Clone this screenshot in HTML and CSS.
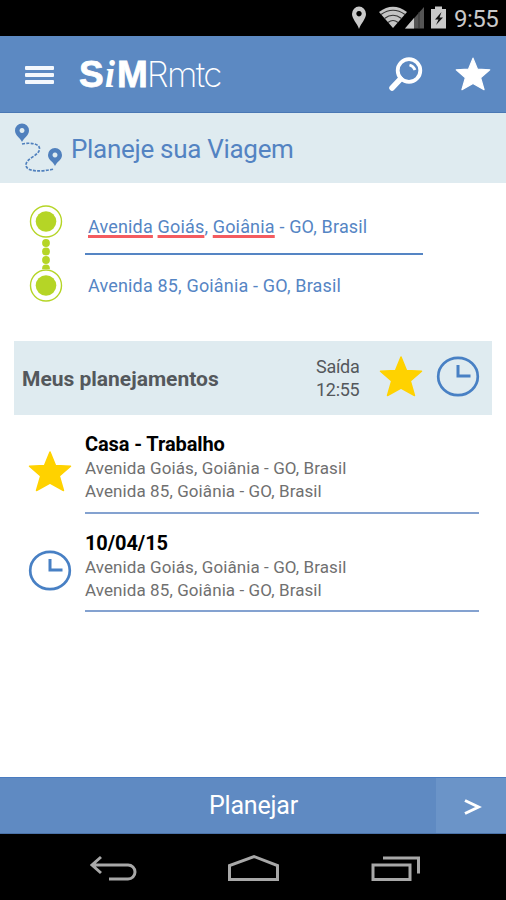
FILE: index.html
```html
<!DOCTYPE html>
<html lang="pt-BR">
<head>
    <meta charset="UTF-8">
    <meta name="viewport" content="width=device-width, initial-scale=1.0">
    <title>SiM Rmtc</title>
    <link rel="stylesheet" href="styles.css">
</head>
<body>

    <!-- shared shapes -->
    <svg class="symbols" width="0" height="0">
        <symbol id="star" viewBox="0 0 44 42">
            <path d="M22 1 L27.5 14.5 L42.5 15.3 L31.3 25 L35.5 39.5 L22 32 L8.5 39.5 L12.7 25 L1.5 15.3 L16.5 14.5 Z" fill="currentColor" stroke="currentColor" stroke-width="1.5" stroke-linejoin="round"/>
        </symbol>
        <symbol id="clock" viewBox="0 0 44 42">
            <ellipse cx="22" cy="20.5" rx="19.8" ry="18.7" fill="none" stroke="currentColor" stroke-width="2.7"/>
            <path d="M22 9 V20 H34.5" fill="none" stroke="currentColor" stroke-width="3"/>
        </symbol>
        <symbol id="stop" viewBox="0 0 34 34">
            <circle cx="17" cy="16.5" r="15.5" fill="#fff" stroke="currentColor" stroke-width="1.4"/>
            <circle cx="17" cy="16.5" r="10.3" fill="currentColor"/>
        </symbol>
    </svg>

    <div class="status-bar">
        <svg width="106" height="36" viewBox="0 0 106 36">
            <path d="M19 29 C17 23 12 19 12 14 A7 7.5 0 0 1 26 14 C26 19 21 23 19 29 Z M19 11 a2.7 2.7 0 1 0 0.01 0 Z" fill="#c9c9c9" fill-rule="evenodd"/>
            <path d="M39 12 Q53 1.5 67 12 L53 28 Z" fill="#c4c4c4"/>
            <path d="M41 14.5 Q53 6 65 14.5 M44.5 18.5 Q53 12 61.5 18.5 M48 22.5 Q53 18.5 58 22.5" fill="none" stroke="#333" stroke-width="1.2"/>
            <path d="M84 7 V28.5 H65 Z" fill="#555"/>
            <path d="M74 18 V28.5 H65 Z" fill="#c9c9c9"/>
            <path d="M79 12 V28" stroke="#333" stroke-width="1"/>
            <path d="M95 9 V6.5 H102 V9 H106 V28.5 H91 V9 Z" fill="#c9c9c9"/>
            <path d="M101.5 12 L95 19.5 H98.5 L96 25 L103 17.5 H99.5 Z" fill="#111"/>
        </svg>
        <span class="time">9:55</span>
    </div>

    <header class="header">
        <div class="menu"><span></span><span></span><span></span></div>
        <div class="logo"><b>S</b><i>i</i><b>M</b><span>Rmtc</span></div>
        <svg class="search" width="36" height="36" viewBox="0 0 36 36">
            <circle cx="21" cy="14.5" r="11.3" fill="none" stroke="#fff" stroke-width="3.8"/>
            <path d="M12.5 23 L4 32" stroke="#fff" stroke-width="5.5" stroke-linecap="round"/>
            <path d="M21.5 9 Q25.5 10 27 14" fill="none" stroke="#fff" stroke-width="2.8"/>
        </svg>
        <svg class="header-star" width="36" height="36"><use href="#star"/></svg>
    </header>

    <div class="title-bar">
        <svg width="50" height="54" viewBox="0 0 50 54">
            <path d="M8 21 C17 19 26 21 25.5 26 C25 33 12 35 12 42 C12 49 27 49 40 46" fill="none" stroke="#5080bd" stroke-width="1.7" stroke-dasharray="3 1.3"/>
            <path d="M8 19 C6 14.5 1 12.5 1 7.5 A7 7 0 0 1 15 7.5 C15 12.5 10 14.5 8 19 Z M8 5 a2.5 2.5 0 1 0 0.01 0 Z" fill="#5080bd" fill-rule="evenodd"/>
            <path d="M41 43 C39 38.5 34 37 34 32 A7 7 0 0 1 48 32 C48 37 43 38.5 41 43 Z M41 29.5 a2.5 2.5 0 1 0 0.01 0 Z" fill="#5080bd" fill-rule="evenodd"/>
        </svg>
        <h1>Planeje sua Viagem</h1>
    </div>

    <div class="route">
        <div class="stops">
            <svg width="34" height="34"><use href="#stop"/></svg>
            <svg class="dots" width="10" height="30" viewBox="0 0 10 30">
                <g fill="currentColor">
                    <circle cx="5" cy="4" r="3.9"/>
                    <circle cx="5" cy="12.5" r="3.9"/>
                    <circle cx="5" cy="21" r="3.9"/>
                    <circle cx="5" cy="29.5" r="3.9"/>
                </g>
            </svg>
            <svg width="34" height="34"><use href="#stop"/></svg>
        </div>
        <div class="fields">
            <div class="field"><u>Avenida</u> <u>Goiás</u>, <u>Goiânia</u> - GO, Brasil</div>
            <div class="field">Avenida 85, Goiânia - GO, Brasil</div>
        </div>
    </div>

    <div class="plans-header">
        <h2>Meus planejamentos</h2>
        <p class="departure">Saída<br>12:55</p>
        <svg class="star" width="44" height="42"><use href="#star"/></svg>
        <svg class="clock" width="44" height="42"><use href="#clock"/></svg>
    </div>

    <div class="plans">
        <div class="plan">
            <svg class="star" width="44" height="42"><use href="#star"/></svg>
            <div class="plan-text">
                <h3>Casa - Trabalho</h3>
                <p class="from">Avenida Goiás, Goiânia - GO, Brasil</p>
                <p class="to">Avenida 85, Goiânia - GO, Brasil</p>
            </div>
        </div>
        <div class="plan">
            <svg class="clock" width="44" height="42"><use href="#clock"/></svg>
            <div class="plan-text">
                <h3>10/04/15</h3>
                <p class="from">Avenida Goiás, Goiânia - GO, Brasil</p>
                <p class="to">Avenida 85, Goiânia - GO, Brasil</p>
            </div>
        </div>
    </div>

    <div class="plan-button">
        <span class="label">Planejar</span>
        <span class="next">
            <svg width="18" height="18" viewBox="0 0 18 18"><path d="M1 2.5 L14.5 9 L1 15.5" fill="none" stroke="#fff" stroke-width="3"/></svg>
        </span>
    </div>

    <div class="nav-bar">
        <svg width="48" height="30" viewBox="0 0 48 30">
            <path d="M12 3 L3 11 L12 19 M3 11 H39 A7 7 0 0 1 39 25 H20" fill="none" stroke="#a8a8a8" stroke-width="3"/>
        </svg>
        <svg width="54" height="30" viewBox="0 0 54 30">
            <path d="M2.5 25.5 V11.5 L27 2.5 L50.5 11.5 V25.5 Z" fill="none" stroke="#a8a8a8" stroke-width="3"/>
        </svg>
        <svg width="50" height="30" viewBox="0 0 50 30">
            <path d="M2 11 H39 V25.5 H2 Z M12 4 H47.5 V19.5" fill="none" stroke="#a8a8a8" stroke-width="3"/>
        </svg>
    </div>

</body>
</html>
```
FILE: styles.css
```css
* {
    box-sizing: border-box;
}

body {
    margin: 0;
    width: 506px;
    height: 900px;
    display: flex;
    flex-direction: column;
    background: #fff;
    font-family: Roboto, sans-serif;
    overflow: hidden;
}

h1, h2, h3, p {
    margin: 0;
}

svg {
    display: block;
    flex-shrink: 0;
}

.symbols {
    display: none;
}

.status-bar {
    height: 36px;
    background: #000;
    display: flex;
    align-items: center;
    padding-left: 340px;
}

.time {
    margin-left: 8px;
    padding-top: 1px;
    font-size: 24px;
    letter-spacing: -0.5px;
    color: #c9c9c9;
}

.header {
    height: 77px;
    background: #5c89c2;
    border-bottom: 1px solid #4a78b4;
    display: flex;
    align-items: center;
    padding-left: 25px;
}

.menu {
    width: 29px;
    display: flex;
    flex-direction: column;
    gap: 3px;
    padding-top: 1px;
}

.menu span {
    height: 4px;
    background: #f4f8fd;
    border-radius: 1px;
}

.logo {
    display: flex;
    align-items: baseline;
    width: 161px;
    margin-left: 25px;
    color: #fff;
    font-family: "Liberation Sans", sans-serif;
    font-size: 37px;
    line-height: 40px;
}

.logo b {
    -webkit-text-stroke: 0.8px #fff;
}

.logo i {
    font-family: "Liberation Serif", serif;
    font-weight: bold;
    margin: 0 2px 0 1px;
}

.logo span {
    font-family: Inter, sans-serif;
    font-weight: 200;
    font-size: 35px;
    letter-spacing: -1.7px;
    margin-left: -1px;
}

.search {
    margin-left: 148px;
}

.header-star {
    margin-left: 31px;
    padding-top: 1px;
    color: #fff;
}

.title-bar {
    height: 70px;
    background: #dfebf0;
    display: flex;
    align-items: center;
    padding: 3px 0 0 14px;
    color: #5383c2;
}

.title-bar h1 {
    margin: -2px 0 0 7px;
    font-size: 26px;
    font-weight: 400;
    letter-spacing: -0.3px;
}

.route {
    height: 158px;
    display: flex;
    padding: 22px 0 0 29px;
    color: #5585c4;
}

.stops {
    width: 34px;
    color: #b5d526;
    display: flex;
    flex-direction: column;
    align-items: center;
}

.fields {
    width: 338px;
    margin-left: 22px;
}

.field {
    height: 50px;
    padding: 11px 0 0 3px;
    font-size: 18px;
    letter-spacing: 0.17px;
    line-height: 22px;
    white-space: nowrap;
}

.field:first-child {
    border-bottom: 2px solid #5585c4;
    margin-bottom: 9px;
}

.field u {
    text-decoration: underline;
    text-decoration-color: #f45c60;
    text-decoration-thickness: 3px;
    text-underline-offset: 2px;
    text-decoration-skip-ink: none;
}

.plans-header {
    height: 74px;
    margin: 0 14px;
    padding-left: 8px;
    background: #dfebf0;
    display: flex;
    align-items: center;
    color: #54585c;
}

.plans-header h2 {
    width: 294px;
    padding-top: 1px;
    font-size: 21px;
    font-weight: 700;
}

.departure {
    width: 64px;
    font-size: 18px;
    letter-spacing: -0.3px;
    line-height: 23px;
}

.star {
    color: #ffd200;
}

.plans-header .star {
    margin: -2px 0 0 -1px;
}

.clock {
    color: #4880c4;
}

.plans-header .clock {
    margin: -2px 0 0 13px;
}

.plans {
    height: 362px;
}

.plan {
    display: flex;
    height: 98px;
    margin: 0 27px 0 28px;
}

.plans .plan:first-child {
    height: 99px;
}

.plan svg {
    margin-top: 36px;
}

.plan-text {
    flex: 1;
    margin-left: 13px;
    border-bottom: 2px solid #84a2d0;
    color: #707070;
    font-size: 17px;
    letter-spacing: 0.09px;
    line-height: 23px;
}

.plan-text h3 {
    padding-top: 16px;
    color: #000;
    font-size: 20px;
    font-weight: 700;
    letter-spacing: -0.1px;
    line-height: 26px;
}

.plan-button {
    height: 57px;
    background: #5f8ac2;
    border-top: 1px solid #4a7cc0;
    border-bottom: 1px solid #4a72a8;
    display: flex;
    align-items: center;
    color: #fff;
}

.label {
    flex: 1;
    padding-left: 209px;
    font-size: 25px;
    letter-spacing: -0.2px;
}

.next {
    width: 70px;
    height: 100%;
    background: #6b94c8;
    display: flex;
    align-items: center;
    padding: 3px 0 0 28px;
}

.nav-bar {
    height: 66px;
    background: #000;
    display: flex;
    padding: 20px 0 0 89px;
}

.nav-bar svg:nth-child(2) {
    margin-left: 90px;
}

.nav-bar svg:nth-child(3) {
    margin-left: 90px;
}
```
